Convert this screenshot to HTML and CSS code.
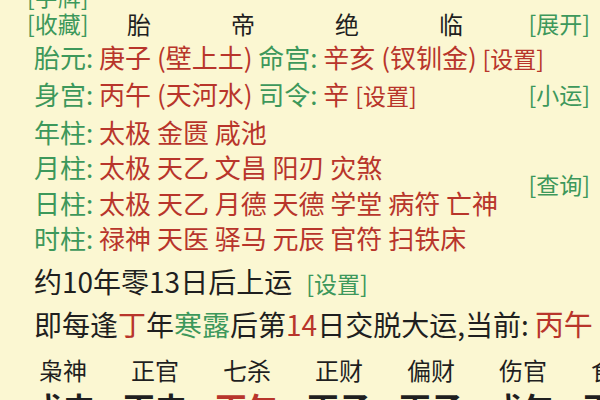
FILE: index.html
```html
<!DOCTYPE html>
<html lang="zh-CN">
<head>
<meta charset="utf-8">
<title>排盘</title>
<link rel="stylesheet" href="styles.css">
</head>
<body>
<div class="page">
  <div class="top"><span class="g link">[字牌]</span></div>
  <div class="head">
    <span class="g link tag">[收藏]</span>
    <span class="cell">胎</span>
    <span class="cell">帝</span>
    <span class="cell">绝</span>
    <span class="cell">临</span>
    <span class="g link right">[展开]</span>
  </div>
  <div class="info">
    <div class="line"><span class="g">胎元:</span> <span class="r">庚子 (壁上土)</span> <span class="g">命宫:</span> <span class="r">辛亥 (钗钏金)</span> <span class="r link">[设置]</span></div>
    <div class="line flexline">
      <span><span class="g">身宫:</span> <span class="r">丙午 (天河水)</span> <span class="g">司令:</span> <span class="r">辛</span> <span class="r link">[设置]</span></span>
      <span class="g link right">[小运]</span>
    </div>
    <div class="group">
      <div class="lines">
        <div class="line"><span class="g">年柱:</span> <span class="r">太极 金匮 咸池</span></div>
        <div class="line"><span class="g">月柱:</span> <span class="r">太极 天乙 文昌 阳刃 灾煞</span></div>
        <div class="line"><span class="g">日柱:</span> <span class="r">太极 天乙 月德 天德 学堂 病符 亡神</span></div>
        <div class="line"><span class="g">时柱:</span> <span class="r">禄神 天医 驿马 元辰 官符 扫铁床</span></div>
      </div>
      <span class="g link">[查询]</span>
    </div>
  </div>
  <div class="big first">约10年零13日后上运<span class="g link set">[设置]</span></div>
  <div class="big second">即每逢<span class="r">丁</span>年<span class="g">寒露</span>后第<span class="r">14</span>日交脱大运,当前:<span class="r now">丙午</span></div>
  <div class="labels">
    <span>枭神</span><span>正官</span><span>七杀</span><span>正财</span><span>偏财</span><span>伤官</span><span>食神</span>
  </div>
  <div class="pillars">
    <span>戊申</span><span>丙申</span><span class="r">丙午</span><span>丙子</span><span>丙子</span><span>戊午</span><span>丙午</span>
  </div>
</div>
</body>
</html>
```

FILE: styles.css
```css
html, body {
  margin: 0;
  height: 100%;
}
body {
  background: #fbf7d2;
  font-family: "Noto Sans CJK SC", "Noto Sans", sans-serif;
  color: #1f1f1f;
  overflow: hidden;
}
.page {
  padding: 0 10px 0 27px;
  white-space: nowrap;
}
.g { color: #3d985b; }
.r { color: #b8352b; }
.link { font-size: 23px; }

.top {
  margin-top: -15px;
  height: 23px;
  line-height: 23px;
}
.head {
  display: flex;
  align-items: center;
  height: 31px;
  font-size: 24px;
  line-height: 31px;
}
.tag {
  width: 60px;
  flex-shrink: 0;
}
.cell {
  width: 104px;
  flex-shrink: 0;
  text-align: center;
}
.right { margin-left: auto; }

.info {
  padding-left: 7px;
  font-size: 26px;
  line-height: 35.4px;
}
.flexline {
  display: flex;
  align-items: center;
}
.group {
  display: flex;
  align-items: center;
}
.lines { flex: 1; }

.big {
  padding-left: 7px;
  font-size: 28px;
}
.first {
  margin-top: 4px;
  line-height: 44px;
}
.second { line-height: 36px; }
.set { margin-left: 14px; }
.now {
  font-size: 29px;
  margin-left: 6px;
}

.labels, .pillars {
  display: grid;
  grid-template-columns: repeat(7, 92px);
  margin-left: -10px;
  text-align: center;
}
.labels {
  margin-top: 10px;
  font-size: 24px;
  line-height: 36px;
}
.pillars {
  margin-top: 3px;
  font-size: 32px;
  font-weight: bold;
  line-height: 32px;
}
```
